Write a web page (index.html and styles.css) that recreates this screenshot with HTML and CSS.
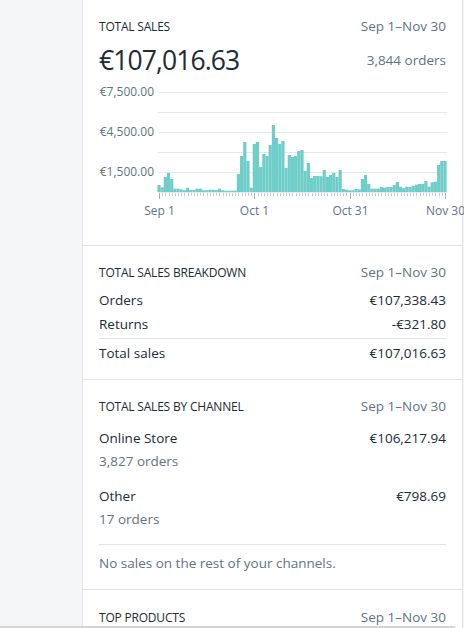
FILE: index.html
```html
<!DOCTYPE html>
<html lang="en">
<head>
    <meta charset="UTF-8">
    <meta name="viewport" content="width=device-width, initial-scale=1.0">
    <title>Sales report</title>
    <link rel="stylesheet" href="styles.css">
</head>
<body>
    <div class="page">
        <div class="card">
            <section class="section">
                <div class="section-header">
                    <h2 class="section-title">Total sales</h2>
                    <span class="muted">Sep 1–Nov 30</span>
                </div>
                <div class="total-row">
                    <span class="total-value">€107,016.63</span>
                    <span class="muted">3,844 orders</span>
                </div>
                <svg id="sales-chart" class="chart" width="348" height="136"></svg>
            </section>

            <section class="section">
                <div class="section-header">
                    <h2 class="section-title">Total sales breakdown</h2>
                    <span class="muted">Sep 1–Nov 30</span>
                </div>
                <div class="breakdown">
                    <div class="line"><span>Orders</span><span>€107,338.43</span></div>
                    <div class="line"><span>Returns</span><span>-€321.80</span></div>
                    <div class="line line-total"><span>Total sales</span><span>€107,016.63</span></div>
                </div>
            </section>

            <section class="section">
                <div class="section-header">
                    <h2 class="section-title">Total sales by channel</h2>
                    <span class="muted">Sep 1–Nov 30</span>
                </div>
                <div class="channels">
                    <div class="channel">
                        <div class="line"><span>Online Store</span><span>€106,217.94</span></div>
                        <div class="muted">3,827 orders</div>
                    </div>
                    <div class="channel">
                        <div class="line"><span>Other</span><span>€798.69</span></div>
                        <div class="muted">17 orders</div>
                    </div>
                </div>
                <p class="channels-note muted">No sales on the rest of your channels.</p>
            </section>

            <section class="section">
                <div class="section-header">
                    <h2 class="section-title">Top products</h2>
                    <span class="muted">Sep 1–Nov 30</span>
                </div>
            </section>
        </div>
    </div>
    <div class="scroll-edge"></div>

    <script>
        // daily sales in euros, Sep 1 - Nov 30
        const sales = [
            525, 350, 1125, 1425, 975, 250, 250, 200, 130, 320,
            150, 150, 250, 250, 130, 130, 170, 170, 150, 250,
            130, 100, 100, 100, 100, 1350, 2700, 3750, 2325, 320,
            3600, 3750, 1875, 2850, 2700, 3525, 5025, 4050, 3600, 3825,
            1800, 2775, 2625, 2700, 3075, 3150, 1575, 2175, 1050, 1200,
            1200, 1180, 1650, 1125, 1275, 1425, 1125, 1650, 225, 170,
            130, 130, 225, 200, 975, 1275, 600, 250, 250, 250,
            375, 320, 375, 375, 525, 750, 400, 280, 400, 375,
            470, 550, 600, 600, 825, 400, 730, 770, 2025, 2325, 2325
        ];

        const svg = document.getElementById('sales-chart');
        const NS = 'http://www.w3.org/2000/svg';
        const left = 60, right = 346, base = 108, max = 7500, plotHeight = 100;
        const step = (right - left) / (sales.length - 1);

        function add(tag, attrs, text) {
            const el = document.createElementNS(NS, tag);
            for (const k in attrs) el.setAttribute(k, attrs[k]);
            if (text) el.textContent = text;
            svg.appendChild(el);
            return el;
        }

        // grid lines, every 1,500
        for (let i = 0; i <= 5; i++) {
            const y = base - i * 20;
            add('line', { x1: 59, x2: 348, y1: y + 0.5, y2: y + 0.5, class: 'grid' });
        }
        [[7500, 8], [4500, 48], [1500, 88]].forEach(([v, y]) => {
            add('text', { x: 55, y: y + 4, 'text-anchor': 'end', class: 'axis-label' },
                '€' + v.toLocaleString('en-US') + '.00');
        });

        // bars
        sales.forEach((v, i) => {
            const h = v / max * plotHeight;
            const cx = left + i * step;
            add('rect', { x: cx - step / 2, y: base - h, width: step, height: h, class: 'bar' });
        });

        // ticks, longer at the start of each period
        const majors = { 0: 'Sep 1', 30: 'Oct 1', 60: 'Oct 31', 90: 'Nov 30' };
        sales.forEach((v, i) => {
            const x = Math.round(left + i * step) + 0.5;
            const major = i in majors;
            add('line', { x1: x, x2: x, y1: base + 1, y2: base + (major ? 7 : 4), class: major ? 'tick tick-major' : 'tick' });
            if (major) {
                add('text', { x: x, y: 131, 'text-anchor': 'middle', class: 'axis-label' }, majors[i]);
            }
        });
    </script>
</body>
</html>
```

FILE: styles.css
```css
body {
    margin: 0;
    background-color: #f4f6f8;
    font-family: "Open Sans", "Noto Sans", Arial, sans-serif;
    font-size: 13.5px;
    color: #212b36;
    overflow: hidden;
}

.page {
    padding-left: 82px;
    height: 628px;
}

.card {
    width: 379px;
    background-color: white;
    border-left: 1px solid #dfe3e8;
    border-right: 1px solid #dfe3e8;
    min-height: 100%;
}

.section {
    padding: 16px 16px 16px 16px;
    border-bottom: 1px solid #dfe3e8;
}

.section:first-child {
    padding-bottom: 25px;
}

.section:last-child {
    border-bottom: none;
    padding-top: 17px;
}

.section-header {
    display: flex;
    justify-content: space-between;
    align-items: center;
    height: 20px;
}

.section-title {
    margin: 0;
    font-size: 12px;
    font-weight: 500;
    text-transform: uppercase;
    letter-spacing: -0.2px;
}

.muted {
    color: #637381;
    line-height: 20px;
}

.total-row {
    display: flex;
    justify-content: space-between;
    align-items: center;
    margin-top: 6px;
    height: 36px;
}

.total-value {
    font-size: 26.5px;
    letter-spacing: -0.9px;
    line-height: 36px;
}

.chart {
    display: block;
    margin-top: 6px;
    overflow: visible;
}

.grid {
    stroke: #e6e9ec;
    stroke-width: 1;
}

.bar {
    fill: #6fcdc9;
}

.tick {
    stroke: #c4cdd5;
    stroke-width: 1;
}

.tick-major {
    stroke: #a3aeb8;
}

.axis-label {
    font-family: "Open Sans", "Noto Sans", Arial, sans-serif;
    font-size: 12px;
    fill: #637381;
}

.breakdown {
    margin-top: 8px;
    display: flex;
    flex-direction: column;
    gap: 4px;
}

.line {
    display: flex;
    justify-content: space-between;
    line-height: 20px;
}

.line-total {
    border-top: 1px solid #dfe3e8;
    padding-top: 4px;
}

.channels {
    margin-top: 12px;
    display: flex;
    flex-direction: column;
    gap: 15px;
}

.channel .muted {
    margin-top: 3px;
}

.channels-note {
    margin: 15px 0 0;
    padding-top: 8px;
    border-top: 1px solid #dfe3e8;
}

.scroll-edge {
    position: fixed;
    left: 0;
    bottom: 0;
    width: 455px;
    height: 2px;
    background-color: #d4d4d4;
}
```
